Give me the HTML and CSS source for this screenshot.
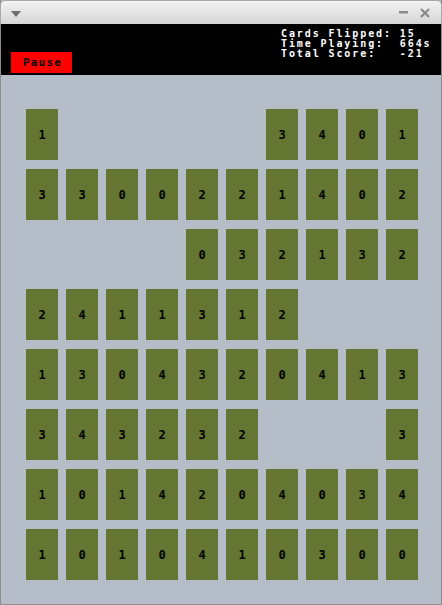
FILE: index.html
```html
<!DOCTYPE html>
<html lang="en">
<head>
    <meta charset="UTF-8">
    <meta name="viewport" content="width=device-width, initial-scale=1.0">
    <link rel="stylesheet" href="styles.css">
    <title>Memory</title>
</head>
<body>
    <div class="window">
        <div class="titlebar">
            <svg class="menu-icon" width="10" height="6" viewBox="0 0 10 6"><polygon points="0,0 10,0 5,6" fill="#6e6e6e"/></svg>
            <div class="title-buttons">
                <svg width="9" height="3" viewBox="0 0 9 3"><rect x="0" y="0" width="9" height="2.5" fill="#8a8a8a"/></svg>
                <svg width="10" height="10" viewBox="0 0 10 10"><path d="M1 1 L9 9 M9 1 L1 9" stroke="#8a8a8a" stroke-width="2.2"/></svg>
            </div>
        </div>

        <div class="header">
            <button class="pause-button">Pause</button>
            <div class="stats">
                <div class="stat-line">Cards Flipped: 15</div>
                <div class="stat-line">Time Playing:  664s</div>
                <div class="stat-line">Total Score:   -21</div>
            </div>
        </div>

        <div class="board" id="board"></div>
    </div>

    <script>
        const rows = [
            '1.....3401',
            '3300221402',
            '....032132',
            '2411312...',
            '1304320413',
            '343232...3',
            '1014204034',
            '1010410300'
        ];

        const board = document.getElementById('board');
        rows.forEach(row => {
            for (const ch of row) {
                const cell = document.createElement('div');
                if (ch === '.') {
                    cell.className = 'empty';
                } else {
                    cell.className = 'card';
                    cell.textContent = ch;
                }
                board.appendChild(cell);
            }
        });
    </script>
</body>
</html>
```

FILE: styles.css
```css
body {
    margin: 0;
    background-color: #ffffff;
}

.window {
    width: 440px;
    height: 604px;
    border: 1px solid #8d8d8d;
    border-top: none;
    display: flex;
    flex-direction: column;
    background-color: #b5bec8;
}

.titlebar {
    height: 24px;
    margin: 0 -1px;
    border-radius: 5px 5px 0 0;
    border: 1px solid #a8a8a8;
    border-bottom: none;
    box-sizing: border-box;
    background: linear-gradient(#f2f2f2, #d6d6d6);
    display: flex;
    align-items: center;
    justify-content: space-between;
    padding: 0 11px 0 10px;
}

.menu-icon {
    margin-top: 3px;
}

.title-buttons {
    display: flex;
    align-items: center;
    gap: 12px;
}

.header {
    height: 51px;
    background-color: #000000;
    display: flex;
    align-items: flex-start;
    justify-content: space-between;
    padding: 0 0 0 10px;
}

.pause-button {
    align-self: flex-end;
    margin-bottom: 2px;
    width: 61px;
    height: 21px;
    background-color: #ff0000;
    border: none;
    padding: 0 0 0 2px;
    font-family: "DejaVu Sans Mono", monospace;
    font-weight: bold;
    font-size: 11px;
    letter-spacing: 1.2px;
    color: #000000;
}

.stats {
    width: 160px;
    padding-top: 5px;
    font-family: "DejaVu Sans Mono", monospace;
    font-weight: bold;
    font-size: 10px;
    line-height: 10px;
    letter-spacing: 1.9px;
    color: #ffffff;
}

.stat-line {
    white-space: pre;
}

.board {
    display: grid;
    grid-template-columns: repeat(10, 32px);
    grid-auto-rows: 51px;
    column-gap: 8px;
    row-gap: 9px;
    padding: 34px 0 0 25px;
}

.card {
    background-color: #657632;
    display: flex;
    align-items: center;
    justify-content: center;
    font-family: "DejaVu Sans Mono", monospace;
    font-weight: bold;
    font-size: 12px;
    color: #000000;
}
```
